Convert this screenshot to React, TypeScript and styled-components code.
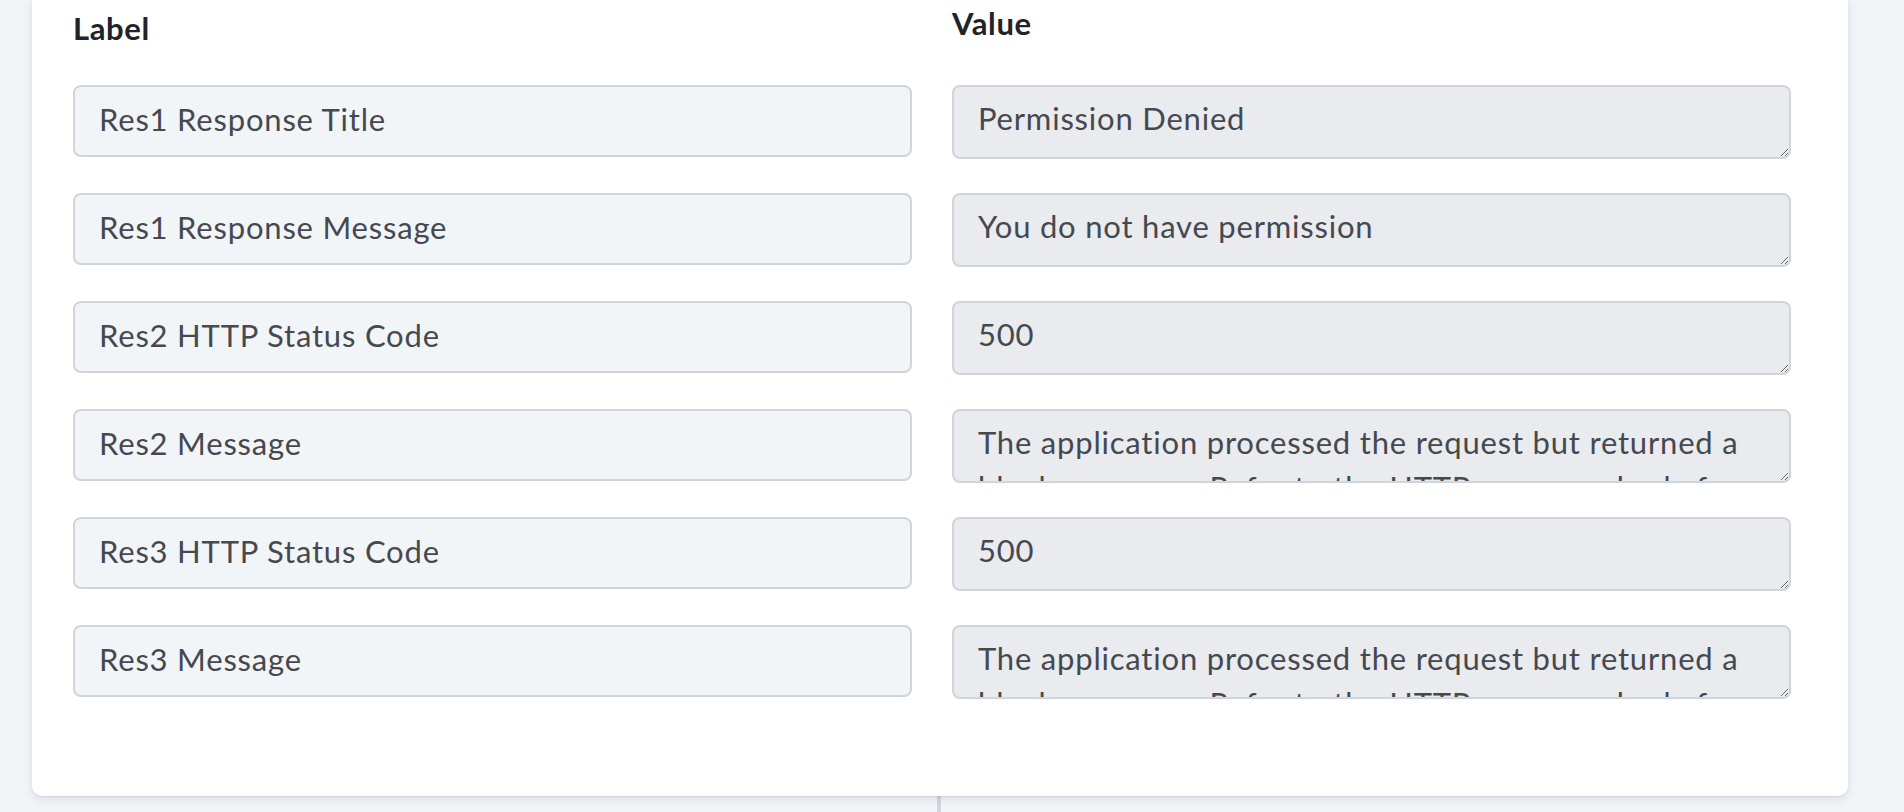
import React from 'react';
import styled, { createGlobalStyle } from 'styled-components';

const GlobalStyle = createGlobalStyle`
  html, body {
    margin: 0;
    padding: 0;
    background: #f2f5f8;
    height: 100%;
    overflow: hidden;
  }
  * {
    box-sizing: border-box;
  }
`;

const Page = styled.div`
  font-family: 'Lato', 'Noto Sans', sans-serif;
  width: 100vw;
  height: 100vh;
  padding: 0 56px 0 32px;
  display: flex;
  flex-direction: column;
  align-items: stretch;
`;

const Card = styled.section`
  background: #ffffff;
  border-radius: 0 0 10px 10px;
  box-shadow: 0 3px 8px rgba(30, 40, 60, 0.12), 0 1px 2px rgba(30, 40, 60, 0.06);
  padding: 5px 57px 97px 41px;
  position: relative;
  z-index: 1;
`;

const Grid = styled.div`
  display: grid;
  grid-template-columns: 1fr 1fr;
  column-gap: 40px;
  row-gap: 34px;
`;

const Heading = styled.div<{ $drop: number }>`
  font-size: 31px;
  font-weight: 700;
  line-height: 36px;
  letter-spacing: 0.6px;
  color: #202328;
  padding-top: ${(p) => p.$drop}px;
  margin-bottom: 5px;
`;

const fieldText = `
  font-family: 'Lato', 'Noto Sans', sans-serif;
  font-size: 31px;
  letter-spacing: 0.8px;
  color: #45494f;
  border: 2px solid #d0d5da;
  border-radius: 8px;
  width: 100%;
  outline: none;
  padding: 0 24px;
`;

const LabelInput = styled.input`
  ${fieldText}
  height: 72px;
  padding-bottom: 4px;
  background: #f2f5f8;
`;

const ValueArea = styled.textarea`
  ${fieldText}
  height: 74px;
  background: #e9ebee;
  padding-top: 9px;
  padding-bottom: 5px;
  line-height: 45px;
  overflow: hidden;
  resize: vertical;
  display: block;
`;

const Connector = styled.div`
  align-self: center;
  width: 4px;
  flex: 1;
  background: #d3d7dc;
  margin-right: 2px;
`;

const longMessage =
  'The application processed the request but returned a blank response. Refer to the HTTP response body for details.';

const rows = [
  { label: 'Res1 Response Title', value: 'Permission Denied' },
  { label: 'Res1 Response Message', value: 'You do not have permission' },
  { label: 'Res2 HTTP Status Code', value: '500' },
  { label: 'Res2 Message', value: longMessage },
  { label: 'Res3 HTTP Status Code', value: '500' },
  { label: 'Res3 Message', value: longMessage },
];

const App: React.FC = () => {
  return (
    <Page>
      <GlobalStyle />
      <Card>
        <Grid>
          <Heading $drop={5}>Label</Heading>
          <Heading $drop={0}>Value</Heading>
          {rows.map((row) => (
            <React.Fragment key={row.label}>
              <LabelInput defaultValue={row.label} />
              <ValueArea defaultValue={row.value} />
            </React.Fragment>
          ))}
        </Grid>
      </Card>
      <Connector />
    </Page>
  );
};

export default App;
